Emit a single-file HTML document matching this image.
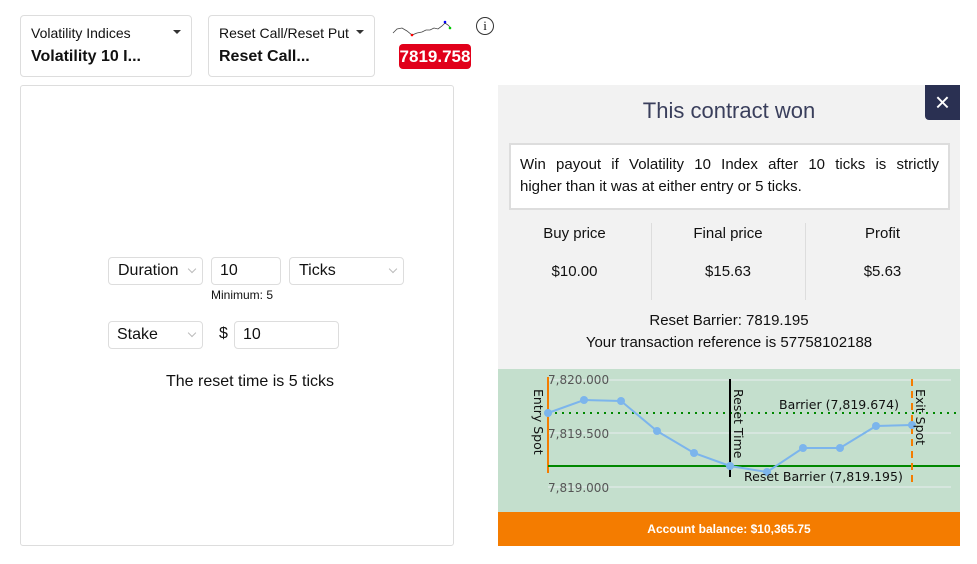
<!DOCTYPE html>
<html><head><meta charset="utf-8"><style>
*{margin:0;padding:0;box-sizing:border-box}
body{width:977px;height:564px;background:#fff;font-family:"Liberation Sans",sans-serif;color:#111;position:relative;overflow:hidden}
.a{position:absolute}
.sel{border:1px solid #ddd;border-radius:4px;background:#fff}
.tri{position:absolute;width:0;height:0;border-left:4px solid transparent;border-right:4px solid transparent;border-top:4px solid #333}
.chev{position:absolute;width:6px;height:6px;border-right:1px solid #bbb;border-bottom:1px solid #bbb;transform:rotate(45deg)}
.c{text-align:center}
</style></head><body>
<div class="a sel" style="left:20px;top:15px;width:172px;height:62px"></div>
<div class="a" style="left:31px;top:25px;font-size:14px">Volatility Indices</div>
<div class="a" style="left:31px;top:48px;font-size:16px;font-weight:bold">Volatility 10 I...</div>
<div class="tri" style="left:173px;top:30px"></div>
<div class="a sel" style="left:208px;top:15px;width:167px;height:62px"></div>
<div class="a" style="left:219px;top:25px;font-size:14px">Reset Call/Reset Put</div>
<div class="a" style="left:219px;top:48px;font-size:16px;font-weight:bold">Reset Call...</div>
<div class="tri" style="left:356px;top:30px"></div>
<svg class="a" style="left:392px;top:18px" width="60" height="22"><polyline points="1,15 5,11 10,10 15,13 20,17 25,15 30,14 34,12 38,12 42,10 46,11 50,8 53,5 56,7 58,9" fill="none" stroke="#444" stroke-width="0.8"/><circle cx="20" cy="17" r="1.3" fill="red"/><circle cx="53" cy="4" r="1.3" fill="blue"/><circle cx="58" cy="10" r="1.3" fill="#0c0"/></svg>
<div class="a c" style="left:399px;top:44px;width:72px;height:25px;background:#e1001a;border-radius:4px;color:#fff;font-weight:bold;font-size:17px;line-height:25px">7819.758</div>
<div class="a c" style="left:476px;top:17px;width:18px;height:18px;border:1.3px solid #333;border-radius:50%;font-size:13px;line-height:16px;font-family:'Liberation Serif',serif">i</div>

<div class="a" style="left:20px;top:85px;width:434px;height:461px;border:1px solid #ddd;border-radius:3px"></div>
<div class="a sel" style="left:108px;top:257px;width:95px;height:28px"></div>
<div class="a" style="left:118px;top:262px;font-size:16px">Duration</div>
<div class="chev" style="left:189px;top:266px"></div>
<div class="a sel" style="left:211px;top:257px;width:70px;height:28px"></div>
<div class="a" style="left:220px;top:262px;font-size:16px">10</div>
<div class="a sel" style="left:289px;top:257px;width:115px;height:28px"></div>
<div class="a" style="left:299px;top:262px;font-size:16px">Ticks</div>
<div class="chev" style="left:390px;top:266px"></div>
<div class="a" style="left:211px;top:288px;font-size:12px">Minimum: 5</div>
<div class="a sel" style="left:108px;top:321px;width:95px;height:28px"></div>
<div class="a" style="left:117px;top:326px;font-size:16px">Stake</div>
<div class="chev" style="left:189px;top:330px"></div>
<div class="a" style="left:219px;top:325px;font-size:16px">$</div>
<div class="a sel" style="left:234px;top:321px;width:105px;height:28px"></div>
<div class="a" style="left:243px;top:326px;font-size:16px">10</div>
<div class="a" style="left:166px;top:373px;font-size:16px">The reset time is 5 ticks</div>

<div class="a" style="left:498px;top:85px;width:462px;height:461px;background:#f2f2f2"></div>
<div class="a c" style="left:498px;top:98px;width:462px;font-size:22px;color:#3a3f5c">This contract won</div>
<div class="a c" style="left:925px;top:85px;width:35px;height:35px;background:#2a3052;border-radius:0 0 0 4px;color:#fff;font-size:26px;line-height:34px">×</div>
<div class="a" style="left:509px;top:143px;width:441px;height:67px;background:#fff;border:2px solid #ddd;padding:9px 9px;font-size:15px;line-height:22px">
<div style="text-align:justify;text-align-last:justify">Win payout if Volatility 10 Index after 10 ticks is strictly</div>
<div>higher than it was at either entry or 5 ticks.</div></div>
<div class="a" style="left:651px;top:223px;width:1px;height:77px;background:#ddd"></div>
<div class="a" style="left:805px;top:223px;width:1px;height:77px;background:#ddd"></div>
<div class="a c" style="left:498px;top:225px;width:153px;font-size:15px">Buy price</div>
<div class="a c" style="left:651px;top:225px;width:154px;font-size:15px">Final price</div>
<div class="a c" style="left:805px;top:225px;width:155px;font-size:15px">Profit</div>
<div class="a c" style="left:498px;top:263px;width:153px;font-size:15px">$10.00</div>
<div class="a c" style="left:651px;top:263px;width:154px;font-size:15px">$15.63</div>
<div class="a c" style="left:805px;top:263px;width:155px;font-size:15px">$5.63</div>
<div class="a c" style="left:498px;top:312px;width:462px;font-size:15px">Reset Barrier: 7819.195</div>
<div class="a c" style="left:498px;top:334px;width:462px;font-size:15px">Your transaction reference is 57758102188</div>

<svg class="a" style="left:498px;top:369px" width="462" height="143">
<rect width="462" height="143" fill="#c4dfcd"/>
<g stroke="#e8eef0" stroke-width="1"><line x1="50" y1="11" x2="453" y2="11"/><line x1="50" y1="64" x2="453" y2="64"/><line x1="50" y1="118" x2="453" y2="118"/></g>
<g font-family="DejaVu Sans,sans-serif" font-size="12" fill="#555"><text x="50" y="15">7,820.000</text><text x="50" y="69">7,819.500</text><text x="50" y="123">7,819.000</text></g>
<line x1="50" y1="8" x2="50" y2="104" stroke="#f47c00" stroke-width="2"/>
<line x1="50" y1="44" x2="462" y2="44" stroke="#080" stroke-width="2" stroke-dasharray="2,5"/>
<line x1="50" y1="97" x2="462" y2="97" stroke="#080" stroke-width="2"/>
<line x1="232" y1="10" x2="232" y2="108" stroke="#000" stroke-width="2"/>
<line x1="414" y1="10" x2="414" y2="118" stroke="#f47c00" stroke-width="2" stroke-dasharray="7,5"/>
<polyline points="50,44 86,31 123,32 159,62 196,84 232,97 269,103 305,79 342,79 378,57 414,56" fill="none" stroke="#7cb5ec" stroke-width="2"/>
<g fill="#7cb5ec"><circle cx="50" cy="44" r="4"/><circle cx="86" cy="31" r="4"/><circle cx="123" cy="32" r="4"/><circle cx="159" cy="62" r="4"/><circle cx="196" cy="84" r="4"/><circle cx="232" cy="97" r="4"/><circle cx="269" cy="103" r="4"/><circle cx="305" cy="79" r="4"/><circle cx="342" cy="79" r="4"/><circle cx="378" cy="57" r="4"/><circle cx="414" cy="56" r="4"/></g>
<g font-family="DejaVu Sans,sans-serif" font-size="12.5" fill="#111">
<text x="281" y="40">Barrier (7,819.674)</text>
<text x="246" y="112">Reset Barrier (7,819.195)</text>
<text transform="translate(36,20) rotate(90)">Entry Spot</text>
<text transform="translate(236,20) rotate(90)">Reset Time</text>
<text transform="translate(418,20) rotate(90)">Exit Spot</text>
</g></svg>
<div class="a c" style="left:498px;top:512px;width:462px;height:34px;background:#f47c00;color:#fff;font-weight:bold;font-size:12px;line-height:34px">Account balance: $10,365.75</div>
</body></html>
